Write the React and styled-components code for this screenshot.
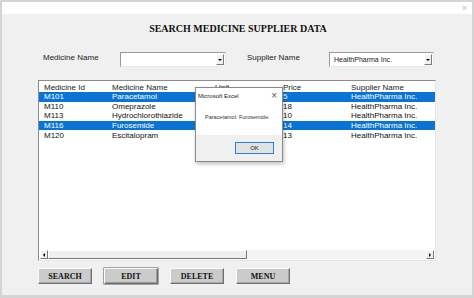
import styled, { createGlobalStyle } from "styled-components"

const GlobalStyle = createGlobalStyle`
  html, body {
    margin: 0;
    padding: 0;
    background: #d6d6d6;
  }
  * {
    box-sizing: border-box;
  }
`

const rows = [
  { id: "M101", name: "Paracetamol", price: "5", supplier: "HealthPharma Inc.", selected: true },
  { id: "M110", name: "Omeprazole", price: "18", supplier: "HealthPharma Inc." },
  { id: "M113", name: "Hydrochlorothiazide", price: "10", supplier: "HealthPharma Inc." },
  { id: "M116", name: "Furosemide", price: "14", supplier: "HealthPharma Inc.", selected: true },
  { id: "M120", name: "Escitalopram", price: "13", supplier: "HealthPharma Inc." },
]

const buttons = ["SEARCH", "EDIT", "DELETE", "MENU"]

const App = () => {
  return (
    <>
      <GlobalStyle />
      <Window>
        <TitleBar>
          <CloseMark>×</CloseMark>
        </TitleBar>
        <FormBody>
          <Heading>SEARCH MEDICINE SUPPLIER DATA</Heading>

          <FilterRow>
            <FieldLabel $width={77}>Medicine Name</FieldLabel>
            <Combo $width={106}>
              <ComboText></ComboText>
              <ComboArrow><ArrowDown /></ComboArrow>
            </Combo>
            <FieldLabel $width={82} $gap={21}>Supplier Name</FieldLabel>
            <Combo $width={105}>
              <ComboText>HealthPharma Inc.</ComboText>
              <ComboArrow><ArrowDown /></ComboArrow>
            </Combo>
          </FilterRow>

          <ListBox>
            <ListRows>
              <HeaderRow>
                <span>Medicine Id</span>
                <span>Medicine Name</span>
                <span>Unit</span>
                <span>Price</span>
                <span>Supplier Name</span>
              </HeaderRow>
              {rows.map((r) => (
                <DataRow key={r.id} $selected={r.selected}>
                  <span>{r.id}</span>
                  <span>{r.name}</span>
                  <span></span>
                  <span>{r.price}</span>
                  <span>{r.supplier}</span>
                </DataRow>
              ))}
            </ListRows>
            <HScroll>
              <ScrollButton><ArrowSide $dir="left" /></ScrollButton>
              <ScrollThumb />
              <ScrollTrack />
              <ScrollButton><ArrowSide $dir="right" /></ScrollButton>
            </HScroll>
          </ListBox>

          <ButtonRow>
            {buttons.map((b) => (
              <ActionButton key={b} $focused={b === "EDIT"}>{b}</ActionButton>
            ))}
          </ButtonRow>

          <MsgBox>
            <MsgTitle>
              <span>Microsoft Excel</span>
              <MsgClose>×</MsgClose>
            </MsgTitle>
            <MsgText>Paracetamol: Furosemide:</MsgText>
            <MsgFooter>
              <OkButton>OK</OkButton>
            </MsgFooter>
          </MsgBox>
        </FormBody>
      </Window>
    </>
  )
}

const Window = styled.div`
  width: 474px;
  height: 298px;
  border: 2px solid #d4d4d4;
  border-bottom-width: 3px;
  background: #f0f0f0;
  display: flex;
  flex-direction: column;
  font-family: "Liberation Sans", Arial, sans-serif;
`

const TitleBar = styled.div`
  height: 12px;
  background: #ffffff;
  display: flex;
  justify-content: flex-end;
  align-items: center;
  padding-right: 5px;
`

const CloseMark = styled.span`
  font-size: 9px;
  color: #b8b8b8;
  line-height: 1;
`

const FormBody = styled.div`
  position: relative;
  flex: 1;
  padding: 8px 36px 0 36px;
  display: flex;
  flex-direction: column;
`

const Heading = styled.h1`
  margin: 0;
  height: 14px;
  line-height: 14px;
  text-align: center;
  font-family: "Liberation Serif", "Times New Roman", serif;
  font-weight: bold;
  font-size: 10px;
  color: #111;
  padding-left: 2px;
`

const FilterRow = styled.div`
  margin-top: 16px;
  height: 15px;
  display: flex;
  align-items: center;
`

const FieldLabel = styled.div`
  width: ${(p) => p.$width}px;
  margin-left: ${(p) => (p.$gap ? p.$gap : 5)}px;
  font-size: 8px;
  color: #222;
  align-self: flex-start;
  padding-top: 1px;
`

const Combo = styled.div`
  width: ${(p) => p.$width}px;
  height: 15px;
  background: #fff;
  border: 1px solid;
  border-color: #9a9a9a #e8e8e8 #e8e8e8 #9a9a9a;
  display: flex;
  align-items: center;
  padding: 1px;
`

const ComboText = styled.div`
  flex: 1;
  font-size: 7px;
  color: #222;
  padding-left: 3px;
`

const ComboArrow = styled.div`
  width: 8px;
  height: 11px;
  display: flex;
  align-items: center;
  justify-content: center;
  border: 1px solid;
  border-color: #fff #7a7a7a #7a7a7a #fff;
  background: #f0f0f0;
`

const ArrowDown = styled.span`
  width: 0;
  height: 0;
  border-left: 2px solid transparent;
  border-right: 2px solid transparent;
  border-top: 2px solid #000;
`

const ListBox = styled.div`
  margin-top: 13px;
  height: 181px;
  background: #fff;
  border: 1px solid;
  border-color: #8c8c8c #e6e6e6 #e6e6e6 #8c8c8c;
  display: flex;
  flex-direction: column;
`

const ListRows = styled.div`
  flex: 1;
`

const gridCols = `
  display: grid;
  grid-template-columns: 68px 103px 68px 68px 1fr;
  padding-left: 5px;
  font-size: 8px;
  align-items: center;
`

const HeaderRow = styled.div`
  ${gridCols}
  height: 10px;
  margin-top: 1px;
  color: #222;
`

const DataRow = styled.div`
  ${gridCols}
  height: 9.6px;
  background: ${(p) => (p.$selected ? "#0a74d6" : "transparent")};
  color: ${(p) => (p.$selected ? "#fff" : "#111")};
`

const HScroll = styled.div`
  height: 9px;
  display: flex;
  align-items: stretch;
  margin: 0 1px 1px 1px;
`

const ScrollButton = styled.div`
  width: 8px;
  display: flex;
  align-items: center;
  justify-content: center;
  border: 1px solid;
  border-color: #fff #777 #777 #fff;
  background: #f0f0f0;
`

const ArrowSide = styled.span`
  width: 0;
  height: 0;
  border-top: 2px solid transparent;
  border-bottom: 2px solid transparent;
  ${(p) => (p.$dir === "left" ? "border-right: 2px solid #000;" : "border-left: 2px solid #000;")}
`

const ScrollThumb = styled.div`
  width: 199px;
  background: #f0f0f0;
  border: 1px solid;
  border-color: #fff #777 #777 #fff;
`

const ScrollTrack = styled.div`
  flex: 1;
  background: #f4f4f4;
`

const ButtonRow = styled.div`
  margin-top: 7px;
  display: flex;
  gap: 12px;
`

const ActionButton = styled.button`
  width: 54px;
  height: 16px;
  padding: 0;
  background: #cbcbcb;
  border: 1px solid;
  border-color: #fafafa #6e6e6e #6e6e6e #fafafa;
  box-shadow: ${(p) => (p.$focused ? "inset -1px -1px 0 #9a9a9a, 0 0 0 0.5px #555" : "inset -1px -1px 0 #a8a8a8")};
  font-family: "Liberation Serif", "Times New Roman", serif;
  font-weight: bold;
  font-size: 8px;
  color: #111;
`

const MsgBox = styled.div`
  position: absolute;
  left: 193px;
  top: 73px;
  width: 88px;
  height: 75px;
  background: #fff;
  border: 1px solid #8a8a8a;
  box-shadow: 1px 2px 4px rgba(0, 0, 0, 0.25);
  display: flex;
  flex-direction: column;
`

const MsgTitle = styled.div`
  height: 15px;
  display: flex;
  justify-content: space-between;
  align-items: center;
  padding: 0 5px 0 2px;
  font-size: 6px;
  color: #222;
`

const MsgClose = styled.span`
  font-size: 10px;
  line-height: 1;
  color: #555;
`

const MsgText = styled.div`
  flex: 1;
  padding: 11px 0 0 9px;
  font-size: 5.5px;
  color: #333;
`

const MsgFooter = styled.div`
  height: 26px;
  background: #f0f0f0;
  display: flex;
  justify-content: flex-end;
  align-items: center;
  padding-right: 8px;
`

const OkButton = styled.button`
  width: 39px;
  height: 12px;
  padding: 0;
  background: #e1e1e1;
  border: 1px solid #2f7fd0;
  font-family: "Liberation Sans", Arial, sans-serif;
  font-size: 6px;
  color: #222;
`

export default App
